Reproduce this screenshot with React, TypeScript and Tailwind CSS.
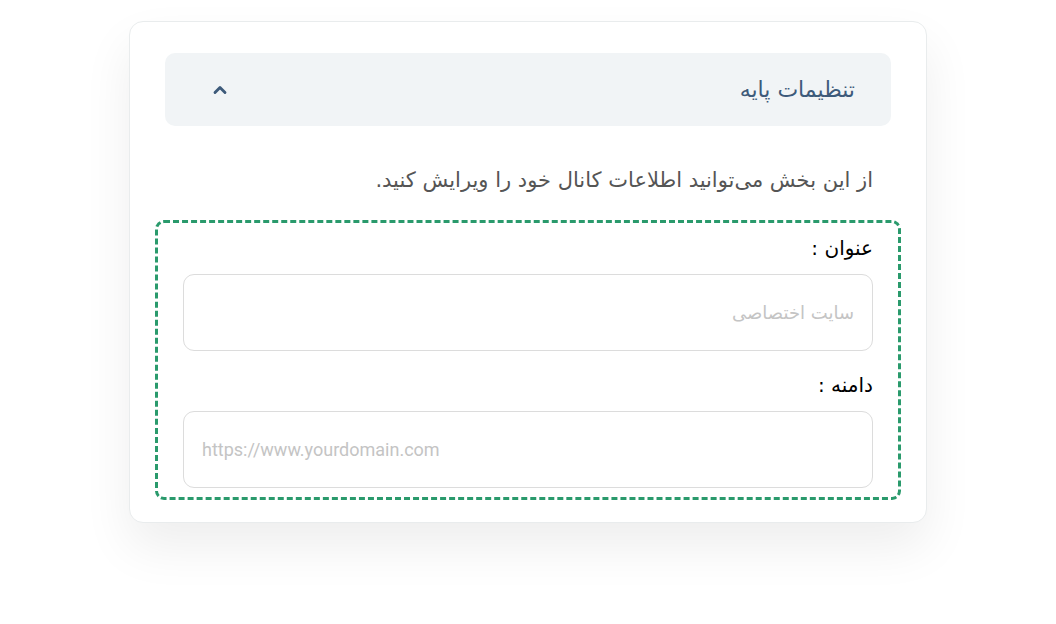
import React from 'react';

const fa = { fontFamily: '"DejaVu Sans", "Noto Sans", sans-serif' };

const Field: React.FC<{ label: string; placeholder: string; ltr?: boolean }> = ({ label, placeholder, ltr }) => (
  <div>
    <label className="block h-[26px] text-[20px] leading-[26px] text-black" style={fa}>
      {label}
    </label>
    <input
      readOnly
      dir={ltr ? 'ltr' : 'rtl'}
      placeholder={placeholder}
      className="mt-[13px] block h-[77px] w-full rounded-[11px] border border-[#dcdcdc] bg-white px-[18px] text-[18px] outline-none placeholder:text-[#c4c4c4]"
      style={ltr ? { fontFamily: 'Roboto, "Liberation Sans", sans-serif' } : fa}
    />
  </div>
);

const App: React.FC = () => {
  return (
    <div dir="rtl" className="flex min-h-screen justify-center bg-white pt-[21px]">
      <div className="h-[502px] w-[798px] rounded-[14px] border border-[#e9eced] bg-white px-[35px] pt-[31px] shadow-[0_24px_50px_rgba(0,0,0,0.07)]">
        {/* header */}
        <div className="flex h-[73px] items-center justify-between rounded-[10px] bg-[#f1f4f6] pl-[45px] pr-[36px]">
          <span className="text-[22px] text-[#3d5a7a]" style={fa}>
            تنظیمات پایه
          </span>
          <svg width="20" height="20" viewBox="0 0 24 24" fill="none" stroke="#3d5a7a" strokeWidth="3.4" strokeLinecap="round" strokeLinejoin="round">
            <path d="M6 15l6-6 6 6" />
          </svg>
        </div>

        <p className="mt-[40px] pr-[18px] text-[21px] leading-[28px] text-[#555]" style={fa}>
          از این بخش می‌توانید اطلاعات کانال خود را ویرایش کنید.
        </p>

        {/* form */}
        <div className="-mx-[10px] mt-[26px] rounded-[9px] border-[3px] border-dashed border-[#2a9a6c] px-[25px] pb-[9px] pt-[12px]">
          <Field label="عنوان :" placeholder="سایت اختصاصی" />
          <div className="mt-[21px]">
            <Field label="دامنه :" placeholder="https://www.yourdomain.com" ltr />
          </div>
        </div>
      </div>
    </div>
  );
};

export default App;
